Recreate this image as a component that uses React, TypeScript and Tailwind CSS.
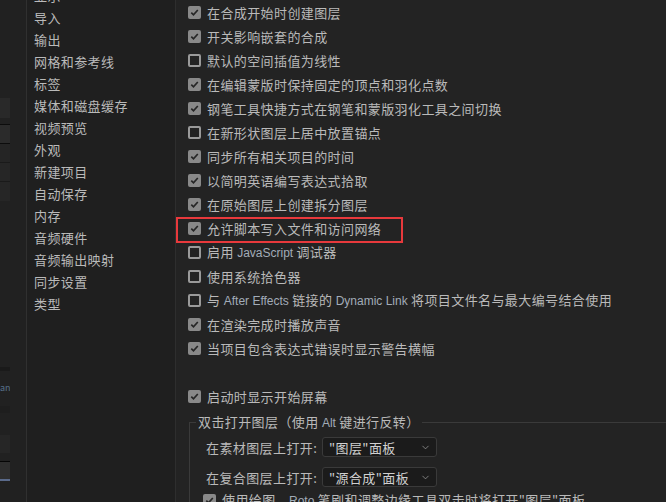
import { ChevronDown } from 'lucide-react'
import type { ReactNode } from 'react'

const sidebarItems = [
  '显示',
  '导入',
  '输出',
  '网格和参考线',
  '标签',
  '媒体和磁盘缓存',
  '视频预览',
  '外观',
  '新建项目',
  '自动保存',
  '内存',
  '音频硬件',
  '音频输出映射',
  '同步设置',
  '类型',
]

function En({ children }: { children: ReactNode }) {
  return <span className="font-['Liberation_Sans',sans-serif] text-[12px] tracking-normal text-[#a2acb8]">{children}</span>
}

function Box({ checked }: { checked: boolean }) {
  if (checked) {
    return (
      <span className="flex h-[13px] w-[13px] shrink-0 items-center justify-center rounded-[2px] bg-[#898989]">
        <svg width="9" height="9" viewBox="0 0 9 9" fill="none">
          <path d="M1.3 4.6 L3.5 6.8 L7.8 2" stroke="#262626" strokeWidth="1.7" />
        </svg>
      </span>
    )
  }
  return <span className="h-[13px] w-[13px] shrink-0 rounded-[2px] border-2 border-[#9a9a9a]" />
}

function Row({ checked, children, highlight }: { checked: boolean; children: ReactNode; highlight?: boolean }) {
  return (
    <div className="relative flex h-6 shrink-0 items-center gap-[6px]">
      <Box checked={checked} />
      <span className="whitespace-nowrap">{children}</span>
      {highlight && (
        <span className="pointer-events-none absolute left-[-12px] top-[1px] h-[26px] w-[227px] border-2 border-[#e8393c]" />
      )}
    </div>
  )
}

function Select({ value }: { value: string }) {
  return (
    <div className="flex h-5 w-[115px] items-center justify-between rounded-[3px] border border-[#3a3a3a] bg-[#1b1b1b] pl-[6px] pr-[5px] text-[#d0d0d0]">
      <span className="whitespace-nowrap">{value}</span>
      <ChevronDown size={11} strokeWidth={1.5} color="#a8a8a8" />
    </div>
  )
}

export default function App() {
  return (
    <div className="flex h-[502px] w-[666px] overflow-hidden bg-[#232323] font-['Noto_Sans_CJK_SC',sans-serif] text-[13px] leading-none tracking-[0.4px] text-[#bababa]">
      {/* sliver of the neighbouring panel */}
      <div className="flex w-[27px] shrink-0 border-r border-[#303030] bg-[#212121]">
        <div className="flex w-[10px] flex-col">
          <div className="h-[98px] shrink-0" />
          <div className="h-[20px] shrink-0 bg-[#292929]" />
          <div className="h-[6px] shrink-0" />
          <div className="h-[20px] shrink-0 border-y border-[#0c0c0c] bg-[#2b2b2b]" />
          <div className="h-[19px] shrink-0 border-b border-[#1a1a1a] bg-[#252525]" />
          <div className="h-[19px] shrink-0 border-b border-[#1a1a1a] bg-[#262626]" />
          <div className="h-[19px] shrink-0 bg-[#262626]" />
          <div className="h-[166px] shrink-0" />
          <div className="h-[4px] shrink-0 bg-[#1a1a1a]" />
          <div className="h-[8px] shrink-0" />
          <div className="h-[17px] shrink-0 overflow-hidden text-[9px] leading-[17px] tracking-normal text-[#56708a]">an</div>
          <div className="h-[10px] shrink-0" />
          <div className="h-[7px] shrink-0 bg-[#1e1e1e]" />
          <div className="h-[22px] shrink-0" />
          <div className="h-[18px] shrink-0 bg-[#262626]" />
          <div className="h-[8px] shrink-0" />
          <div className="h-[18px] shrink-0 border-t border-[#050505] bg-[#2e2e2e]" />
          <div className="h-[2px] shrink-0 bg-[#5a6a8a]" />
        </div>
      </div>

      {/* category list */}
      <div className="w-[149px] shrink-0 border-r border-[#2e2e2e] bg-[#1f1f1f] pl-[7px]">
        <div className="-mt-[16px] flex flex-col">
          {sidebarItems.map((item) => (
            <div key={item} className="flex h-[22px] shrink-0 items-center whitespace-nowrap">
              {item}
            </div>
          ))}
        </div>
      </div>

      {/* settings */}
      <div className="flex min-w-0 flex-1 flex-col pl-3">
        <Row checked>在合成开始时创建图层</Row>
        <Row checked>开关影响嵌套的合成</Row>
        <Row checked={false}>默认的空间插值为线性</Row>
        <Row checked>在编辑蒙版时保持固定的顶点和羽化点数</Row>
        <Row checked>钢笔工具快捷方式在钢笔和蒙版羽化工具之间切换</Row>
        <Row checked={false}>在新形状图层上居中放置锚点</Row>
        <Row checked>同步所有相关项目的时间</Row>
        <Row checked>以简明英语编写表达式拾取</Row>
        <Row checked>在原始图层上创建拆分图层</Row>
        <Row checked highlight>允许脚本写入文件和访问网络</Row>
        <Row checked={false}>
          启用 <En>JavaScript</En> 调试器
        </Row>
        <Row checked={false}>使用系统拾色器</Row>
        <Row checked={false}>
          与 <En>After Effects</En> 链接的 <En>Dynamic Link</En> 将项目文件名与最大编号结合使用
        </Row>
        <Row checked>在渲染完成时播放声音</Row>
        <Row checked>当项目包含表达式错误时显示警告横幅</Row>

        <div className="mt-[24px] shrink-0">
          <Row checked>启动时显示开始屏幕</Row>
        </div>

        <fieldset className="ml-px mt-[5px] shrink-0 border-l border-t border-[#3a3a3a]">
          <legend className="ml-[6px] px-[2px] leading-[18px] whitespace-nowrap">
            双击打开图层（使用 <En>Alt</En> 键进行反转）
          </legend>
          <div className="flex h-[30px] items-center pl-4">
            <span className="w-[116px] whitespace-nowrap">在素材图层上打开:</span>
            <Select value={'"图层"面板'} />
          </div>
          <div className="flex h-[30px] items-center pl-4">
            <span className="w-[116px] whitespace-nowrap">在复合图层上打开:</span>
            <Select value={'"源合成"面板'} />
          </div>
          <div className="-mt-1 pl-[13px]">
            <div className="flex h-6 items-center gap-[6px]">
              <Box checked />
              <span className="whitespace-nowrap">
                使用绘图、<En>Roto</En> 笔刷和调整边缘工具双击时将打开"图层"面板
              </span>
            </div>
          </div>
        </fieldset>
      </div>
    </div>
  )
}
